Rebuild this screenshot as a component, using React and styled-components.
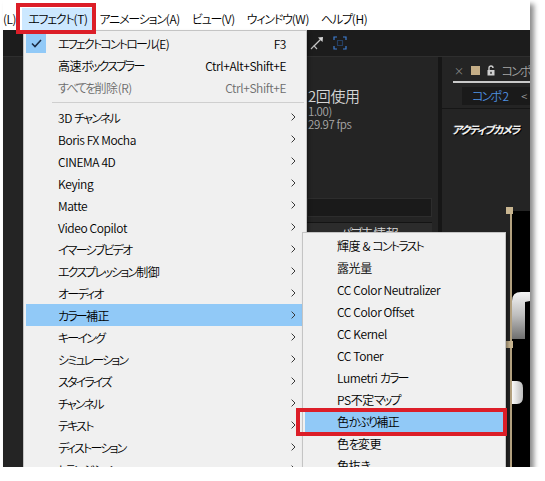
import React from 'react'
import styled, { createGlobalStyle, css } from 'styled-components'

const GlobalStyle = createGlobalStyle`
  html, body {
    margin: 0;
    padding: 0;
    background: #fff;
  }
  body {
    font-family: "Noto Sans CJK JP", "Noto Sans", sans-serif;
    font-size: 12px;
    font-weight: 350;
    letter-spacing: -0.4px;
    font-feature-settings: "palt";
  }
`

// Yu Gothic UI kana are much narrower than Noto's, so kana runs get tighter tracking
const Kana = styled.span`
  letter-spacing: ${p => p.$tight || -1.8}px;
`

const KANA = /([\u3040-\u30ff]+)/

const Label = ({ text, tight }) =>
  text.split(KANA).map((part, i) =>
    KANA.test(part) ? <Kana key={i} $tight={tight}>{part}</Kana> : part
  )

const Frame = styled.div`
  position: relative;
  margin-left: 3px;
  width: 527px;
  height: 467px;
  display: flex;
  flex-direction: column;
  overflow: hidden;
  box-shadow: 4px 4px 5px rgba(0, 0, 0, 0.45);
`

/* ---------- top menu bar ---------- */

const MenuBar = styled.div`
  flex: none;
  height: 30px;
  background: #fff;
  display: flex;
  align-items: flex-end;
`

const BarItem = styled.div`
  position: relative;
  z-index: 20;
  height: 22px;
  line-height: 22px;
  padding: 0 6px;
  color: #000;
  white-space: nowrap;
  &:first-child {
    padding-left: 0;
  }
  ${p => p.$active && css`
    background: #cce8ff;
    &::after {
      content: '';
      position: absolute;
      left: -6px;
      right: -3px;
      top: -5px;
      bottom: -4px;
      border: 4px solid #dc1e28;
    }
  `}
`

/* ---------- dark workspace ---------- */

const Workspace = styled.div`
  position: relative;
  flex: 1;
  background: #232323;
  display: flex;
  flex-direction: column;
`

const Toolbar = styled.div`
  flex: none;
  height: 26px;
  background: #1c1c1c;
  border-bottom: 1px solid #2e2e2e;
  display: flex;
  align-items: center;
  gap: 9px;
  padding-left: 307px;
`

const Panels = styled.div`
  flex: 1;
  display: flex;
`

const ProjectPanel = styled.div`
  width: 435px;
  background: #242424;
  display: flex;
  flex-direction: column;
`

const Info = styled.div`
  margin-top: 30px;
  padding-left: 305px;
  display: flex;
  flex-direction: column;
`

const InfoLine = styled.div`
  font-size: ${p => (p.$big ? '15px' : '11.5px')};
  line-height: ${p => (p.$big ? '18px' : '13px')};
  color: ${p => (p.$big ? '#d6d6d6' : '#a8a8a8')};
  white-space: nowrap;
`

const SearchField = styled.div`
  margin: 67px 6px 0 304px;
  height: 17px;
  background: #1a1a1a;
  border: 1px solid #2d2d2d;
`

const ColumnHeader = styled.div`
  margin: 5px 6px 0 304px;
  height: 20px;
  border-top: 1px solid #141414;
  background: #2c2c2c;
  color: #d8d8d8;
  font-size: 13px;
  line-height: 20px;
  text-align: center;
`

const PanelDivider = styled.div`
  width: 4px;
  background: #161616;
`

const CompPanel = styled.div`
  flex: 1;
  background: #242424;
  display: flex;
  flex-direction: column;
`

const TabRow = styled.div`
  flex: none;
  height: 26px;
  padding-left: 11px;
  display: flex;
`

const Tab = styled.div`
  flex: 1;
  display: flex;
  align-items: center;
  gap: 7px;
  padding-top: 2px;
  border-bottom: 2px solid #c9c9c9;
  color: #a6a6a6;
  white-space: nowrap;
`

const CloseMark = styled.span`
  font-size: 10px;
  color: #8c8c8c;
  margin-left: 1px;
`

const ColorChip = styled.span`
  width: 9px;
  height: 9px;
  background: #c4ad86;
`

const ViewerBar = styled.div`
  flex: none;
  height: 25px;
  border-bottom: 1px solid #161616;
  display: flex;
  align-items: center;
  padding-left: 20px;
`

const CompTab = styled.div`
  flex: 1;
  height: 18px;
  background: #1a1a1a;
  display: flex;
  align-items: center;
  justify-content: space-between;
  padding: 0 3px 0 10px;
  color: #4f92e3;
  white-space: nowrap;
`

const Back = styled.span`
  color: #9a9a9a;
  font-size: 11px;
`

const Viewer = styled.div`
  flex: 1;
  display: flex;
  flex-direction: column;
  padding: 13px 0 0 10px;
`

const CameraLabel = styled.div`
  color: #f2f2f2;
  font-size: 11px;
  font-weight: 700;
  font-style: italic;
  line-height: 14px;
  text-shadow: 1px 1px 0 #000, -1px 0 0 #555;
  white-space: nowrap;
`

const Canvas = styled.div`
  position: relative;
  flex: 1;
  margin: 75px 0 0 58px;
  background: #000;
  border-left: 2px solid #b4a280;
`

const Handle = styled.span`
  position: absolute;
  left: -6px;
  top: ${p => p.$top}px;
  width: 7px;
  height: 7px;
  background: #c8b590;
`

/* ---------- dropdown menus ---------- */

const Dropdown = styled.div`
  position: absolute;
  left: ${p => p.$left}px;
  top: ${p => p.$top}px;
  width: ${p => p.$width}px;
  z-index: ${p => p.$z};
  box-sizing: border-box;
  padding: 1px 0 4px;
  background: #f0f0f0;
  border: 1px solid #c4c4c4;
  box-shadow: 2px 2px 3px rgba(0, 0, 0, 0.35);
`

const Row = styled.div`
  position: relative;
  display: grid;
  grid-template-columns: 32px 1fr auto 18px;
  align-items: center;
  height: 22px;
  margin: 0 2px;
  color: ${p => (p.$disabled ? '#6d6d6d' : '#000')};
  background: ${p => (p.$active ? '#91c9f7' : 'transparent')};
  white-space: nowrap;
  ${p => p.$boxed && css`
    &::after {
      content: '';
      position: absolute;
      left: -9px;
      right: -4px;
      top: -2px;
      bottom: -4px;
      border: 4px solid #dc1e28;
    }
  `}
`

const CheckCell = styled.span`
  width: 20px;
  height: 19px;
  background: #91c9f7;
  display: flex;
  align-items: center;
  justify-content: center;
`

const Shortcut = styled.span`
  color: inherit;
`

const Arrow = styled.span`
  display: flex;
  padding-left: 5px;
`

const Separator = styled.div`
  height: 8px;
  margin: 0 2px 0 28px;
  display: flex;
  align-items: center;
  &::before {
    content: '';
    flex: 1;
    height: 1px;
    background: #cfcfcf;
  }
`

/* ---------- icons ---------- */

const Chevron = () => (
  <svg width="5" height="8" viewBox="0 0 5 8">
    <polyline points="0.6,0.6 4,4 0.6,7.4" fill="none" stroke="#3a3a3a" strokeWidth="1" />
  </svg>
)

const Check = () => (
  <svg width="11" height="9" viewBox="0 0 11 9">
    <polyline points="1,4.5 4,7.5 10,1" fill="none" stroke="#1c2c44" strokeWidth="1.6" />
  </svg>
)

const PinArrow = () => (
  <svg width="14" height="14" viewBox="0 0 14 14">
    <line x1="4" y1="10" x2="10.5" y2="3.5" stroke="#c9c9c9" strokeWidth="1.3" />
    <polygon points="8,1.5 13,1 12.5,6" fill="#d8d8d8" />
    <polyline points="1,13 4,9.8 7,13" fill="none" stroke="#bdbdbd" strokeWidth="1.2" />
  </svg>
)

const RegionIcon = () => (
  <svg width="14" height="14" viewBox="0 0 14 14" fill="none" stroke="#3f7fd3" strokeWidth="1.2">
    <polyline points="1,4 1,1 4,1" />
    <polyline points="10,1 13,1 13,4" />
    <polyline points="13,10 13,13 10,13" />
    <polyline points="4,13 1,13 1,10" />
    <rect x="4.5" y="4.5" width="5" height="5" strokeDasharray="1 1" stroke="#2f62a8" />
  </svg>
)

const Lock = () => (
  <svg width="8" height="11" viewBox="0 0 8 11">
    <path d="M2 5 V3 a2 2 0 0 1 4 0" fill="none" stroke="#cfcfcf" strokeWidth="1.4" />
    <rect x="0.5" y="5" width="7" height="5.5" fill="#cfcfcf" />
    <rect x="3.3" y="6.8" width="1.4" height="2" fill="#242424" />
  </svg>
)

const LetterShapes = () => (
  <svg width="18" height="260" viewBox="0 0 18 260" style={{ display: 'block' }}>
    <defs>
      <linearGradient id="shapeA" x1="0" y1="0" x2="0" y2="1">
        <stop offset="0" stopColor="#f4f4f4" />
        <stop offset="0.5" stopColor="#bdbdbd" />
        <stop offset="1" stopColor="#6f6f6f" />
      </linearGradient>
      <linearGradient id="shapeB" x1="0" y1="0" x2="1" y2="0">
        <stop offset="0" stopColor="#fafafa" />
        <stop offset="1" stopColor="#bcbcbc" />
      </linearGradient>
    </defs>
    <path d="M0 90 Q0 81 9 81 L18 81 L18 90 L13 91 L13 128 L0 128 Z" fill="url(#shapeA)" />
    <path d="M0 170 L5 170 Q11 170 11 177 L11 186 Q11 193 5 193 L0 193 Z" fill="url(#shapeB)" />
  </svg>
)

/* ---------- data ---------- */

const effectItems = [
  '3D チャンネル',
  'Boris FX Mocha',
  'CINEMA 4D',
  'Keying',
  'Matte',
  'Video Copilot',
  'イマーシブビデオ',
  'エクスプレッション制御',
  'オーディオ',
  'カラー補正',
  'キーイング',
  'シミュレーション',
  'スタイライズ',
  'チャンネル',
  'テキスト',
  'ディストーション',
  'トランジション',
]

const colorItems = [
  '輝度 & コントラスト',
  '露光量',
  'CC Color Neutralizer',
  'CC Color Offset',
  'CC Kernel',
  'CC Toner',
  'Lumetri カラー',
  'PS不定マップ',
  '色かぶり補正',
  '色を変更',
  '色抜き',
]

const barItems = ['(L)', 'エフェクト(T)', 'アニメーション(A)', 'ビュー(V)', 'ウィンドウ(W)', 'ヘルプ(H)']

const App = () => (
  <>
    <GlobalStyle />
    <Frame>
      <MenuBar>
        {barItems.map(item => (
          <BarItem key={item} $active={item === 'エフェクト(T)'}>
            <Label text={item} tight={-1.2} />
          </BarItem>
        ))}
      </MenuBar>

      <Workspace>
        <Toolbar>
          <PinArrow />
          <RegionIcon />
        </Toolbar>
        <Panels>
          <ProjectPanel>
            <Info>
              <InfoLine $big>2回使用</InfoLine>
              <InfoLine>1.00)</InfoLine>
              <InfoLine>29.97 fps</InfoLine>
            </Info>
            <SearchField />
            <ColumnHeader><Label text="パブ未情報" /></ColumnHeader>
          </ProjectPanel>
          <PanelDivider />
          <CompPanel>
            <TabRow>
              <Tab>
                <CloseMark>×</CloseMark>
                <ColorChip />
                <Lock />
                <span><Label text="コンポ" /></span>
              </Tab>
            </TabRow>
            <ViewerBar>
              <CompTab>
                <span><Label text="コンポ 2" /></span>
                <Back>&lt;</Back>
              </CompTab>
            </ViewerBar>
            <Viewer>
              <CameraLabel><Label text="アクティブカメラ" tight={-1.4} /></CameraLabel>
              <Canvas>
                <Handle $top={-4} />
                <Handle $top={130} />
                <LetterShapes />
              </Canvas>
            </Viewer>
          </CompPanel>
        </Panels>

        <Dropdown $left={20} $top={0} $width={284} $z={10}>
          <Row>
            <CheckCell><Check /></CheckCell>
            <span><Label text="エフェクトコントロール(E)" /></span>
            <Shortcut>F3</Shortcut>
          </Row>
          <Row>
            <span />
            <span><Label text="高速ボックスブラー" /></span>
            <Shortcut>Ctrl+Alt+Shift+E</Shortcut>
          </Row>
          <Row $disabled>
            <span />
            <span><Label text="すべてを削除(R)" /></span>
            <Shortcut>Ctrl+Shift+E</Shortcut>
          </Row>
          <Separator />
          {effectItems.map(item => (
            <Row key={item} $active={item === 'カラー補正'}>
              <span />
              <span><Label text={item} /></span>
              <span />
              <Arrow><Chevron /></Arrow>
            </Row>
          ))}
        </Dropdown>

        <Dropdown $left={299} $top={202} $width={204} $z={11}>
          {colorItems.map(item => (
            <Row key={item} $active={item === '色かぶり補正'} $boxed={item === '色かぶり補正'}>
              <span />
              <span><Label text={item} /></span>
            </Row>
          ))}
        </Dropdown>
      </Workspace>
    </Frame>
  </>
)

export default App
